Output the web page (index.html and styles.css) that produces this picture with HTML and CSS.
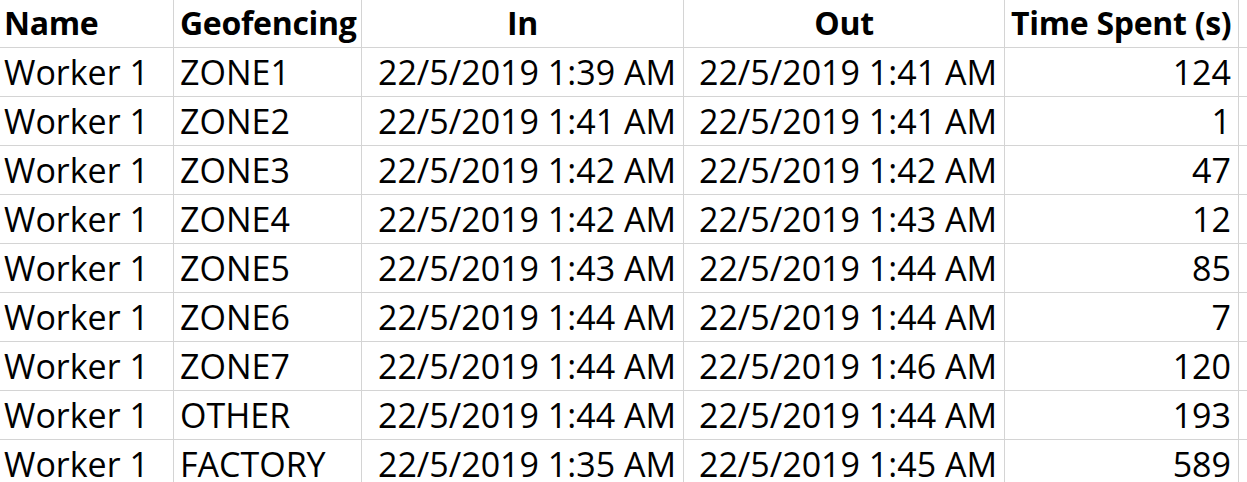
FILE: index.html
```html
<!DOCTYPE html>
<html>
<head>
<meta charset="utf-8">
<link rel="stylesheet" href="styles.css">
</head>
<body>
<div class="sheet">
  <div class="cell head">Name</div><div class="cell head">Geofencing</div><div class="cell head center">In</div><div class="cell head center">Out</div><div class="cell head">Time Spent (s)</div><div class="cell"></div>

  <div class="cell name">Worker 1</div><div class="cell zone">ZONE1</div><div class="cell num">22/5/2019 1:39 AM</div><div class="cell num">22/5/2019 1:41 AM</div><div class="cell num">124</div><div class="cell"></div>
  <div class="cell name">Worker 1</div><div class="cell zone">ZONE2</div><div class="cell num">22/5/2019 1:41 AM</div><div class="cell num">22/5/2019 1:41 AM</div><div class="cell num">1</div><div class="cell"></div>
  <div class="cell name">Worker 1</div><div class="cell zone">ZONE3</div><div class="cell num">22/5/2019 1:42 AM</div><div class="cell num">22/5/2019 1:42 AM</div><div class="cell num">47</div><div class="cell"></div>
  <div class="cell name">Worker 1</div><div class="cell zone">ZONE4</div><div class="cell num">22/5/2019 1:42 AM</div><div class="cell num">22/5/2019 1:43 AM</div><div class="cell num">12</div><div class="cell"></div>
  <div class="cell name">Worker 1</div><div class="cell zone">ZONE5</div><div class="cell num">22/5/2019 1:43 AM</div><div class="cell num">22/5/2019 1:44 AM</div><div class="cell num">85</div><div class="cell"></div>
  <div class="cell name">Worker 1</div><div class="cell zone">ZONE6</div><div class="cell num">22/5/2019 1:44 AM</div><div class="cell num">22/5/2019 1:44 AM</div><div class="cell num">7</div><div class="cell"></div>
  <div class="cell name">Worker 1</div><div class="cell zone">ZONE7</div><div class="cell num">22/5/2019 1:44 AM</div><div class="cell num">22/5/2019 1:46 AM</div><div class="cell num">120</div><div class="cell"></div>
  <div class="cell name">Worker 1</div><div class="cell zone">OTHER</div><div class="cell num">22/5/2019 1:44 AM</div><div class="cell num">22/5/2019 1:44 AM</div><div class="cell num">193</div><div class="cell"></div>
  <div class="cell name">Worker 1</div><div class="cell zone">FACTORY</div><div class="cell num">22/5/2019 1:35 AM</div><div class="cell num">22/5/2019 1:45 AM</div><div class="cell num">589</div><div class="cell"></div>
</div>
</body>
</html>
```

FILE: styles.css
```css
html, body {
  margin: 0;
  padding: 0;
  background: #ffffff;
  overflow: hidden;
}

.sheet {
  display: grid;
  grid-template-columns: 173px 187px 321px 320px 233px 1fr;
  grid-template-rows: 47px;
  grid-auto-rows: 48px;
  gap: 1px;
  background: #d4d4d4;
  width: 1247px;
  font-family: "Open Sans", "Noto Sans", sans-serif;
  font-size: 34px;
  line-height: 44px;
  color: #000000;
}

.cell {
  background: #ffffff;
  white-space: nowrap;
  padding: 2px 6px 0;
}

.head {
  font-weight: 700;
  font-size: 32px;
  letter-spacing: -0.3px;
  padding-top: 1px;
  padding-left: 6px;
}

.head:first-child,
.name {
  padding-left: 4px;
}

.center {
  text-align: center;
}

.num {
  text-align: right;
  padding-right: 7px;
}

.zone {
  padding-left: 6px;
}
```
